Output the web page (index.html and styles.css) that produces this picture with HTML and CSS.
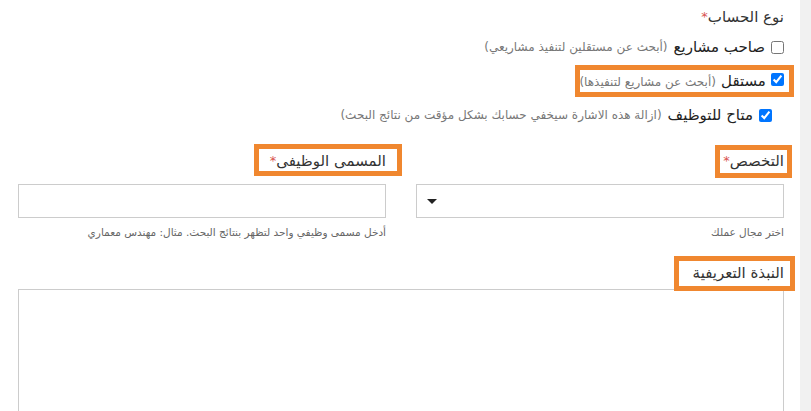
FILE: index.html
```html
<!DOCTYPE html>
<html lang="ar">
<head>
<meta charset="utf-8">
<title>نموذج الحساب</title>
<link rel="stylesheet" href="styles.css">
</head>
<body>
<div class="page">
  <main class="form">
    <div class="group">
      <div class="label">نوع الحساب<span class="req">*</span></div>
      <label class="check">
        <input type="checkbox">
        <span class="main">صاحب مشاريع</span>
        <span class="note">(أبحث عن مستقلين لتنفيذ مشاريعي)</span>
      </label>
      <label class="check mark mark-row">
        <input type="checkbox" checked>
        <span class="main">مستقل</span>
        <span class="note">(أبحث عن مشاريع لتنفيذها)</span>
      </label>
      <label class="check inset">
        <input type="checkbox" checked>
        <span class="main">متاح للتوظيف</span>
        <span class="note">(ازالة هذه الاشارة سيخفي حسابك بشكل مؤقت من نتائج البحث)</span>
      </label>
    </div>

    <div class="cols">
      <div class="col">
        <div class="label"><span class="mark mark-spec">التخصص<span class="req">*</span></span></div>
        <div class="field select"><span class="caret"></span></div>
        <div class="help">اختر مجال عملك</div>
      </div>
      <div class="col">
        <div class="label"><span class="mark mark-title">المسمى الوظيفى<span class="req">*</span></span></div>
        <div class="field"></div>
        <div class="help">أدخل مسمى وظيفي واحد لتظهر بنتائج البحث. مثال: مهندس معماري</div>
      </div>
    </div>

    <div class="bio">
      <div class="label"><span class="mark mark-bio">النبذة التعريفية</span></div>
      <div class="field area"></div>
    </div>
  </main>
  <div class="strip"></div>
</div>
</body>
</html>
```

FILE: styles.css
```css
* { box-sizing: border-box; }
html, body { margin: 0; padding: 0; background: #fff; }
body {
  font-family: "DejaVu Sans", "Noto Sans", sans-serif;
  color: #333;
}
.page {
  display: flex;
  direction: ltr;
  height: 411px;
  overflow: hidden;
}
.form {
  width: 800px;
  direction: rtl;
  padding: 0 16px 0 18px;
}
.strip {
  width: 11px;
  background: #f1f1f1;
}
.label {
  font-size: 15px;
  line-height: 20px;
  color: #333;
}
.req { color: #d9534f; font-size: 13px; vertical-align: top; }
.group { padding-top: 7px; }
.group > .label { margin-bottom: 10px; }
.check {
  display: flex;
  align-items: center;
  gap: 6px;
  height: 20px;
  margin-bottom: 14px;
  white-space: nowrap;
}
.check input { margin: 0; width: 13px; height: 13px; }
.check .main { font-size: 15px; color: #222; }
.check .note { font-size: 12px; color: #777; }
.check.inset { padding-right: 12px; margin-bottom: 0; }

.mark { position: relative; display: inline-block; }
.mark::after {
  content: "";
  position: absolute;
  border: 5px solid #f0872f;
  pointer-events: none;
}
.mark-row { width: max-content; }
.mark-row::after { top: -6px; bottom: -6px; right: -10px; left: -4px; }
.mark-spec::after { top: -6px; bottom: -7px; right: -8px; left: -8px; }
.mark-title::after { top: -7px; bottom: -5px; right: -16px; left: -16px; }
.mark-bio::after { top: -7px; bottom: -8px; right: -11px; left: -19px; }

.cols {
  display: grid;
  grid-template-columns: 1fr 1fr;
  column-gap: 30px;
  margin-top: 25px;
}
.col .label { height: 22px; margin-bottom: 12px; padding-top: 1px; }
.col .label .mark { color: #333; }
.field {
  border: 1px solid #ccc;
  height: 34px;
  background: #fff;
}
.select { display: flex; align-items: center; justify-content: flex-end; padding-left: 10px; }
.caret {
  width: 0; height: 0;
  border-left: 5px solid transparent;
  border-right: 5px solid transparent;
  border-top: 5px solid #222;
}
.help {
  font-size: 10.5px;
  color: #666;
  margin-top: 7px;
  line-height: 14px;
}
.bio { margin-top: 24px; }
.bio .label { height: 22px; margin-bottom: 4px; }
.area { height: 140px; }
```
